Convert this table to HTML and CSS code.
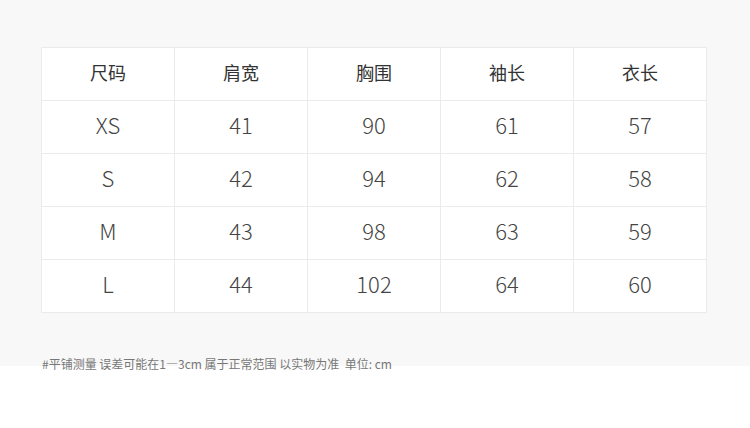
FILE: index.html
```html
<!DOCTYPE html>
<html lang="zh">
<head>
<meta charset="utf-8">
<link rel="stylesheet" href="styles.css">
</head>
<body>
<div class="page">
  <table class="size-table">
    <thead>
      <tr><th>尺码</th><th>肩宽</th><th>胸围</th><th>袖长</th><th>衣长</th></tr>
    </thead>
    <tbody>
      <tr><td>XS</td><td>41</td><td>90</td><td>61</td><td>57</td></tr>
      <tr><td>S</td><td>42</td><td>94</td><td>62</td><td>58</td></tr>
      <tr><td>M</td><td>43</td><td>98</td><td>63</td><td>59</td></tr>
      <tr><td>L</td><td>44</td><td>102</td><td>64</td><td>60</td></tr>
    </tbody>
  </table>
  <p class="note">#平铺测量 误差可能在1—3cm 属于正常范围 以实物为准&nbsp; 单位: cm</p>
</div>
</body>
</html>
```

FILE: styles.css
```css
html, body {
  margin: 0;
  padding: 0;
}
body {
  width: 750px;
  height: 428px;
  background: linear-gradient(#f8f8f8 0, #f8f8f8 366px, #ffffff 366px);
  font-family: "Noto Sans CJK SC", "Noto Sans", sans-serif;
  color: #333;
}
.page {
  padding: 47px 0 0 41px;
}
.size-table {
  border-collapse: collapse;
  width: 666px;
  background: #fff;
  table-layout: fixed;
}
.size-table th,
.size-table td {
  border: 1px solid #ebebeb;
  height: 53px;
  padding: 0 0 4px;
  box-sizing: border-box;
  text-align: center;
  vertical-align: middle;
}
.size-table th {
  font-size: 18px;
  font-weight: 400;
  color: #333;
}
.size-table td {
  padding-bottom: 6px;
  font-size: 22px;
  font-weight: 300;
  color: #444;
}
.note {
  margin: 43px 0 0 1px;
  font-size: 12px;
  color: #777;
  line-height: 16px;
}
```
